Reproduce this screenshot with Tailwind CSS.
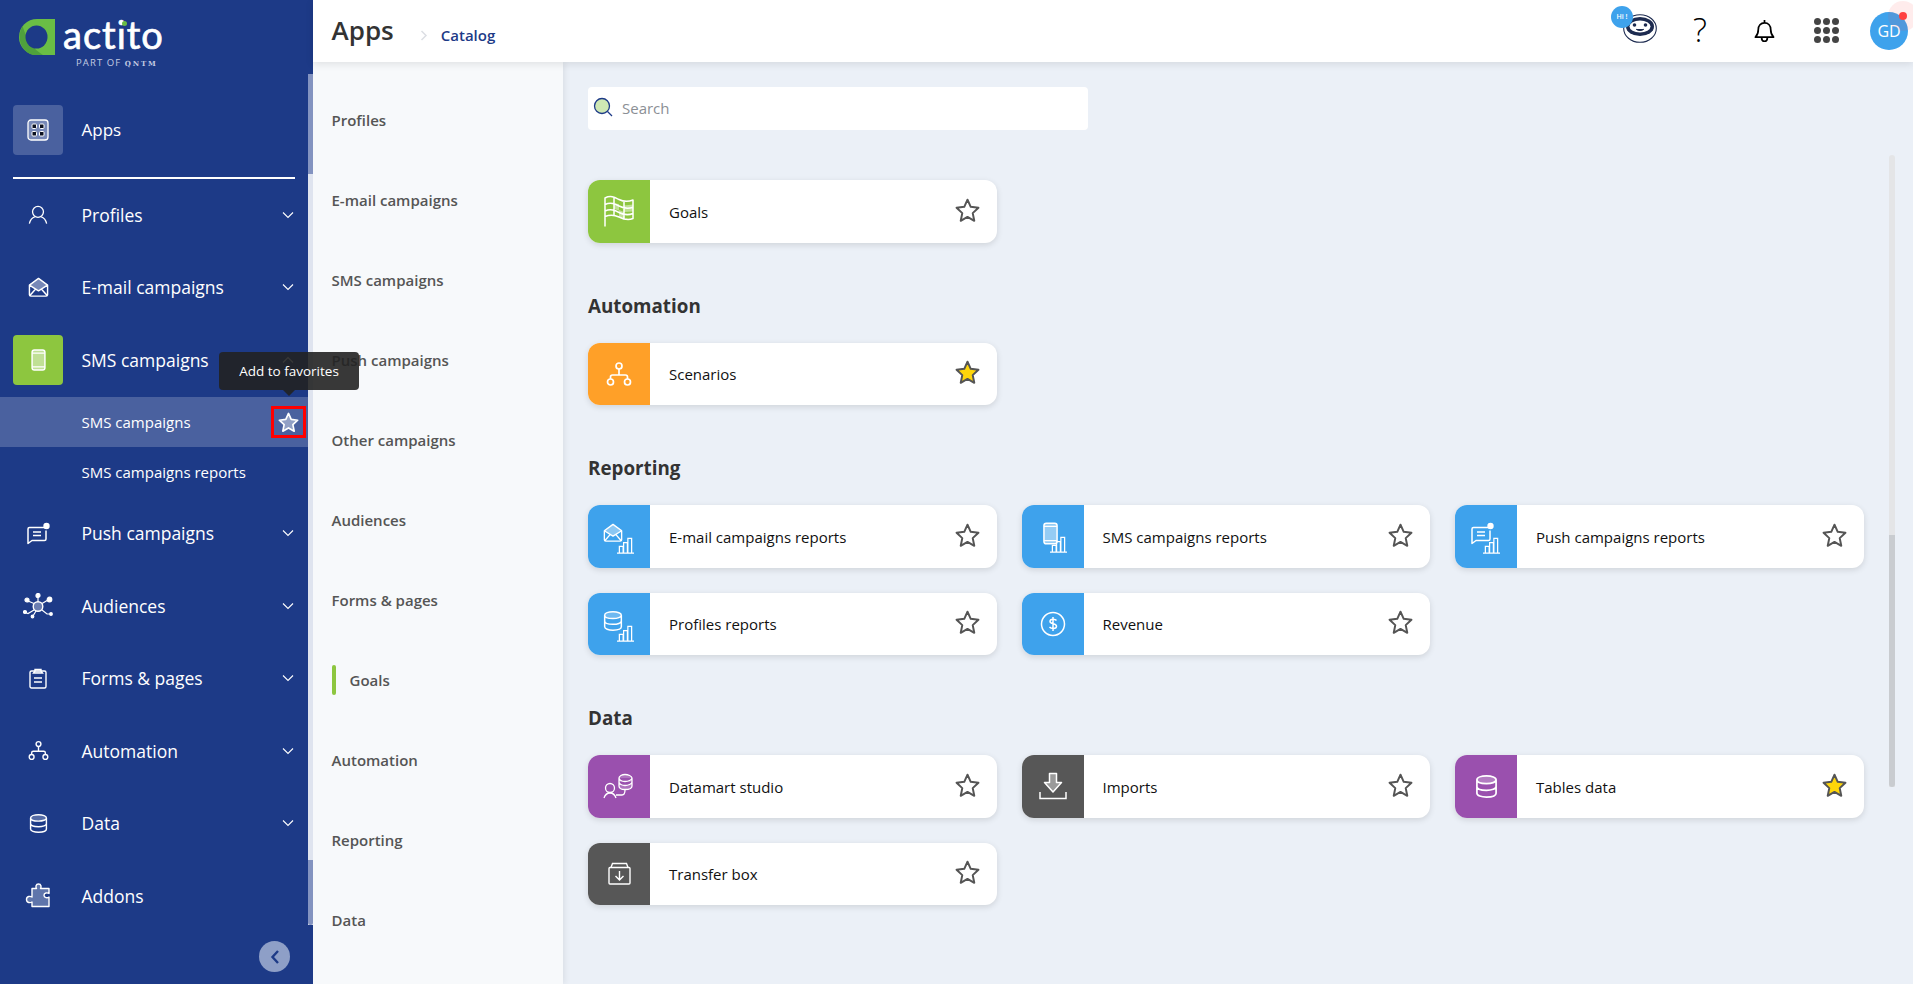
<!DOCTYPE html>
<html lang="en">

<head>
  <meta charset="UTF-8">
  <title>Apps - Catalog</title>
  <script src="https://cdn.jsdelivr.net/npm/@tailwindcss/browser@4"></script>
</head>

<body class="font-['Open_Sans',sans-serif]">
  <!-- shared icons -->
  <svg class="hidden">
    <symbol id="star" viewBox="0 0 24 24">
      <path d="M12 1.600l3.100 6.900 7.400.9-5.500 5.100 1.500 7.400L12 18.200l-6.500 3.700L7 14.500 1.500 9.400l7.400-.9z" stroke-width="1.900" stroke-linejoin="round" />
    </symbol>
    <symbol id="chev" viewBox="0 0 12 8">
      <path d="M1 1.500l5 5 5-5" fill="none" stroke="#fff" stroke-width="1.100" />
    </symbol>
    <symbol id="tree" viewBox="0 0 26 26">
      <g fill="none" stroke="currentColor" stroke-width="1.700">
        <circle cx="13" cy="5" r="3" />
        <circle cx="4.500" cy="21" r="3" />
        <circle cx="21.500" cy="21" r="3" />
        <path d="M13 8v6M4.500 18v-2a2 2 0 0 1 2-2h13a2 2 0 0 1 2 2v2" />
      </g>
    </symbol>
    <symbol id="db" viewBox="0 0 24 26">
      <path d="M2 6c0-2.500 4.500-4 10-4s10 1.500 10 4-4.500 4-10 4S2 8.500 2 6z" fill="#fff" fill-opacity=".25" />
      <path d="M2 6c0-2.500 4.500-4 10-4s10 1.500 10 4v14c0 2.500-4.500 4-10 4s-10-1.500-10-4zM2 6c0 2.500 4.500 4 10 4s10-1.500 10-4M2 13c0 2.500 4.500 4 10 4s10-1.500 10-4" fill="none" stroke="#fff" stroke-width="1.800" />
    </symbol>
    <symbol id="bars" viewBox="0 0 20 18">
      <path d="M1 17h18M3.500 17v-7h4v7M8 17V6h4v11M12.500 17V1.500h4V17" fill="none" stroke="#fff" stroke-width="1.300" />
    </symbol>
    <symbol id="envelope" viewBox="0 0 22 22">
      <path d="M11 1.500L21 8l-10 6L1 8z" fill="#fff" fill-opacity=".4" />
      <path d="M1.500 8.500L11 1.500l9.500 7v10a1.500 1.500 0 0 1-1.500 1.500H3a1.500 1.500 0 0 1-1.500-1.500zM1.500 8.500L11 14.500l9.500-6M1.500 20l6.500-7.500M20.500 20L14 12.500" fill="none" stroke="#fff" stroke-width="1.500" stroke-linejoin="round" />
    </symbol>
    <symbol id="phone" viewBox="0 0 16 24">
      <rect x="1" y="1" width="14" height="22" rx="2.500" fill="#fff" fill-opacity=".45" stroke="#fff" stroke-width="1.600" />
      <path d="M1 4.500h14M1 19.500h14" stroke="#fff" stroke-width="1.300" />
    </symbol>
    <symbol id="bubble" viewBox="0 0 24 22">
      <path d="M19 5H3.500A1.500 1.500 0 0 0 2 6.500V21l4-3h12.500a1.500 1.500 0 0 0 1.500-1.500V8" fill="none" stroke="#fff" stroke-width="1.500" stroke-linejoin="round" />
      <path d="M7 9.500h8M7 13h8" stroke="#fff" stroke-width="1.500" />
      <circle cx="20.500" cy="3.500" r="3.200" fill="#fff" />
    </symbol>
  </svg>

  <div class="flex h-screen overflow-hidden bg-[#ebf0f7]">

    <!-- Main sidebar -->
    <aside class="relative w-[313px] shrink-0 bg-[#1d3a87] text-white">
      <!-- Logo -->
      <div class="relative h-[105px]">
        <svg class="absolute left-[19px] top-[18px]" width="37" height="38" viewBox="0 0 37 38">
          <path d="M18 1a18 18 0 1 0 0 36h18V1z" fill="#6abd45" />
          <path d="M3.500 8C-3 20 2 34 14 37h10C14 31 8 22 3.500 8z" fill="#4fa13c" />
          <path d="M17.500 7.500a11 11.500 0 1 1 0 23 11 11.500 0 0 1 0-23z" fill="#1d3a87" />
          <path d="M29 1h7v36h-7z" fill="#6abd45" />
        </svg>
        <span class="absolute left-[63px] top-[8px] font-['Lato',sans-serif] text-[38px] leading-[52px] tracking-[1px] [-webkit-text-stroke:0.7px_white]">actito</span>
        <span class="absolute left-[122px] top-[21px] w-[5px] h-[5px] rounded-full bg-[#6abd45]"></span>
        <span class="absolute left-[76px] top-[56px] text-[9.500px] leading-[14px] tracking-[1.100px] text-[#c3cbe2] whitespace-nowrap">PART OF <span class="font-['DejaVu_Serif',serif] font-bold text-[7px] tracking-[1.800px]">QNTM</span></span>
      </div>

      <div class="flex items-center h-[50px]">
        <div class="ml-[13px] w-[50px] h-[50px] rounded-[4px] bg-white/20 flex items-center justify-center">
          <svg width="22" height="22" viewBox="0 0 22 22">
            <rect x="1" y="1" width="20" height="20" rx="3" fill="#fff" fill-opacity=".25" stroke="#fff" stroke-width="1.300" />
            <rect x="5" y="5" width="4.500" height="4.500" rx="1" fill="#0b1020" stroke="#fff" stroke-width="1" />
            <rect x="12.500" y="5" width="4.500" height="4.500" rx="1" fill="#0b1020" stroke="#fff" stroke-width="1" />
            <rect x="5" y="12.500" width="4.500" height="4.500" rx="1" fill="#0b1020" stroke="#fff" stroke-width="1" />
            <rect x="12.500" y="12.500" width="4.500" height="4.500" rx="1" fill="#0b1020" stroke="#fff" stroke-width="1" />
          </svg>
        </div>
        <span class="ml-[18.500px] text-[17px]">Apps</span>
      </div>
      <div class="ml-[13px] mt-[22px] w-[282px] h-[1.500px] bg-white"></div>

      <nav class="text-[17.500px]">
        <div class="flex items-center h-[72.500px] pr-[19px]">
          <div class="ml-[13px] w-[50px] flex justify-center">
            <svg width="20" height="20" viewBox="0 0 22 22" fill="none" stroke="#fff" stroke-width="1.400"><circle cx="11" cy="7.500" r="6" /><path d="M1.500 20.500c1-4.500 4-7 6-7.500M20.500 20.500c-1-4.500-4-7-6-7.500" /></svg>
          </div>
          <span class="ml-[18.500px] flex-1">Profiles</span>
          <svg width="12" height="8"><use href="#chev" /></svg>
        </div>
        <div class="flex items-center h-[72.500px] pr-[19px]">
          <div class="ml-[13px] w-[50px] flex justify-center"><svg width="21" height="21"><use href="#envelope" /></svg></div>
          <span class="ml-[18.500px] flex-1">E-mail campaigns</span>
          <svg width="12" height="8"><use href="#chev" /></svg>
        </div>
        <div class="flex items-center h-[72.500px] pr-[19px]">
          <div class="ml-[13px] w-[50px] h-[50px] rounded-[4px] bg-[#8dc63f] flex items-center justify-center"><svg width="15" height="22"><use href="#phone" /></svg></div>
          <span class="ml-[18.500px] flex-1">SMS campaigns</span>
          <svg class="rotate-180" width="12" height="8"><use href="#chev" /></svg>
        </div>
        <div class="flex items-center h-[50px] mt-[1px] pl-[81.500px] text-[15px] bg-white/20">SMS campaigns</div>
        <div class="flex items-center h-[50px] pl-[81.500px] text-[15px]">SMS campaigns reports</div>
        <div class="flex items-center h-[72.500px] pr-[19px]">
          <div class="ml-[13px] w-[50px] flex justify-center"><svg width="24" height="23"><use href="#bubble" /></svg></div>
          <span class="ml-[18.500px] flex-1">Push campaigns</span>
          <svg width="12" height="8"><use href="#chev" /></svg>
        </div>
        <div class="flex items-center h-[72.500px] pr-[19px]">
          <div class="ml-[13px] w-[50px] flex justify-center">
            <svg width="30" height="26" viewBox="0 0 30 26" fill="none" stroke="#fff" stroke-width="1.200">
              <circle cx="15" cy="13.500" r="4.800" fill="#fff" fill-opacity=".35" stroke-width="1.400" />
              <path d="M15 8.700V3.500M19 10.500l6-3.500M11 10.500L5 8M11 17l-6 3.500-3-1M19 17l5 4h4M13 18l-3 5" />
              <circle cx="15" cy="2.500" r="2" fill="#fff" /><circle cx="26.500" cy="6.500" r="2.300" fill="#fff" /><circle cx="4" cy="7" r="2" fill="#fff" /><circle cx="2" cy="19" r="1.500" fill="#fff" /><circle cx="28" cy="21" r="1.300" fill="#fff" /><circle cx="9.500" cy="23.500" r="1.300" fill="#fff" />
            </svg>
          </div>
          <span class="ml-[18.500px] flex-1">Audiences</span>
          <svg width="12" height="8"><use href="#chev" /></svg>
        </div>
        <div class="flex items-center h-[72.500px] pr-[19px]">
          <div class="ml-[13px] w-[50px] flex justify-center">
            <svg width="18" height="21" viewBox="0 0 18 21" fill="none" stroke="#fff" stroke-width="1.400">
              <rect x="1" y="3" width="16" height="17" rx="1.500" />
              <path d="M6 3V1.500h6V3l1.500 2h-9zM5 10h8M5 14h8" fill="#fff" fill-opacity=".4" />
            </svg>
          </div>
          <span class="ml-[18.500px] flex-1">Forms &amp; pages</span>
          <svg width="12" height="8"><use href="#chev" /></svg>
        </div>
        <div class="flex items-center h-[72.500px] pr-[19px]">
          <div class="ml-[13px] w-[50px] flex justify-center text-white"><svg width="21" height="21"><use href="#tree" /></svg></div>
          <span class="ml-[18.500px] flex-1">Automation</span>
          <svg width="12" height="8"><use href="#chev" /></svg>
        </div>
        <div class="flex items-center h-[72.500px] pr-[19px]">
          <div class="ml-[13px] w-[50px] flex justify-center"><svg width="19" height="21"><use href="#db" /></svg></div>
          <span class="ml-[18.500px] flex-1">Data</span>
          <svg width="12" height="8"><use href="#chev" /></svg>
        </div>
        <div class="flex items-center h-[72.500px] pr-[19px]">
          <div class="ml-[13px] w-[50px] flex justify-center">
            <svg width="26" height="25" viewBox="0 0 26 25"><path d="M7 6h4.500c-1-1.500-.8-4.500 2-4.500s3 3 2 4.500H24v5c-1.500-1-5-1-5 1.800s3.500 2.800 5 1.800V24H7v-4.500c-1.500 1-5.500 1.200-5.500-2.500S5.500 13.500 7 14.500z" transform="translate(0 -.5)" fill="#5f75ab" stroke="#fff" stroke-width="1.400" stroke-linejoin="round" /></svg>
          </div>
          <span class="ml-[18.500px] flex-1">Addons</span>
        </div>
      </nav>

      <!-- Sidebar scrollbar -->
      <div class="absolute right-0 top-[74px] w-[5px] h-[851px] bg-[#dfe4ef]">
        <div class="h-[100px] bg-[#8393c0]"></div>
        <div class="absolute bottom-0 w-full h-[65px] rounded-b-sm bg-[#8393c0]"></div>
      </div>

      <!-- Collapse button -->
      <button class="absolute left-[259px] top-[941px] w-[31px] h-[31px] rounded-full bg-[#8e9fc7] flex items-center justify-center">
        <svg width="10" height="16" viewBox="0 0 10 16"><path d="M8 2L2.500 8 8 14" fill="none" stroke="#1d3a87" stroke-width="2.400" /></svg>
      </button>

      <!-- Favorite star, highlighted by a red box -->
      <div class="absolute left-[271px] top-[406px] w-[35px] h-[32px] border-[3px] border-[#f00] flex items-center justify-center">
        <svg class="fill-white/40 stroke-white" width="21" height="21"><use href="#star" /></svg>
      </div>
    </aside>

    <div class="flex-1 flex flex-col min-w-0">
      <!-- Top bar -->
      <header class="relative z-10 h-[62px] shrink-0 bg-white shadow-[0_2px_8px_rgba(0,0,0,0.1)] flex items-center pl-[18.500px]">
        <h1 class="text-[26px] font-semibold text-[#333] leading-none -mt-[2px]">Apps</h1>
        <svg class="ml-[26px] mt-[8px]" width="8" height="11" viewBox="0 0 8 11"><path d="M1.500 1l4.500 4.500L1.500 10" fill="none" stroke="#dcdfe4" stroke-width="1.500" /></svg>
        <span class="ml-[13px] mt-[8px] text-[15px] font-semibold text-[#1d3a87]">Catalog</span>
        <div class="ml-auto relative h-full w-[320px]">
          <!-- robot + hi badge -->
          <svg class="absolute left-[30px] top-[14px]" width="34" height="29" viewBox="0 0 34 29">
            <ellipse cx="17" cy="14.500" rx="16.300" ry="13.800" fill="#fff" stroke="#1d2b50" stroke-width="1.100" />
            <ellipse cx="17" cy="12.500" rx="14" ry="9.500" fill="#1d2b50" />
            <ellipse cx="17" cy="12.500" rx="10.500" ry="6" fill="#fff" />
            <circle cx="11.500" cy="11" r="1.800" fill="#1d2b50" /><circle cx="22.500" cy="11" r="1.800" fill="#1d2b50" />
            <path d="M13 15c2 2 6 2 8 0" fill="#1d2b50" stroke="#1d2b50" />
          </svg>
          <span class="absolute left-[18px] top-[6px] w-[22px] h-[22px] rounded-full bg-[#3ea2ec] text-white text-[7px] font-semibold flex items-center justify-center">Hi !</span>
          <!-- help -->
          <span class="absolute left-[100px] top-[10px] text-[33px] leading-[40px] font-light text-black">?</span>
          <!-- bell -->
          <svg class="absolute left-[161px] top-[18px]" width="21" height="25" viewBox="0 0 22 26" fill="none" stroke="#000" stroke-width="1.800"><path d="M1.500 20c2-2 3-3.500 3-8 0-4 2.500-7 6.500-7s6.500 3 6.500 7c0 4.500 1 6 3 8zM11 5V2" stroke-linejoin="round" /><path d="M8 20.500c0 5 6 5 6 0" /></svg>
          <!-- apps menu -->
          <div class="absolute left-[221px] top-[18px] grid grid-cols-3 gap-[2px]">
            <span class="w-[7px] h-[7px] rounded-full bg-[#444]"></span><span class="w-[7px] h-[7px] rounded-full bg-[#444]"></span><span class="w-[7px] h-[7px] rounded-full bg-[#444]"></span>
            <span class="w-[7px] h-[7px] rounded-full bg-[#444]"></span><span class="w-[7px] h-[7px] rounded-full bg-[#444]"></span><span class="w-[7px] h-[7px] rounded-full bg-[#444]"></span>
            <span class="w-[7px] h-[7px] rounded-full bg-[#444]"></span><span class="w-[7px] h-[7px] rounded-full bg-[#444]"></span><span class="w-[7px] h-[7px] rounded-full bg-[#444]"></span>
          </div>
          <!-- avatar -->
          <span class="absolute left-[277px] top-[12px] w-[38px] h-[38px] rounded-full bg-[#3ea2ec] text-white text-[16px] flex items-center justify-center">GD</span>
          <span class="absolute left-[295px] top-[1px] w-[30px] h-[30px] rounded-full bg-[#ff4040]/10"></span>
          <span class="absolute left-[306px] top-[12px] w-[8px] h-[8px] rounded-full bg-[#ff4040]"></span>
        </div>
      </header>

      <div class="flex flex-1 min-h-0">
        <!-- Catalog sections -->
        <nav class="w-[250px] shrink-0 pt-[18px] pl-[18.500px] bg-[#f7f9fb] shadow-[2px_0_6px_rgba(0,0,0,0.07)] text-[15px] font-semibold text-[#555]">
          <div class="flex items-center h-[80px]">Profiles</div>
          <div class="flex items-center h-[80px]">E-mail campaigns</div>
          <div class="flex items-center h-[80px]">SMS campaigns</div>
          <div class="flex items-center h-[80px]">Push campaigns</div>
          <div class="flex items-center h-[80px]">Other campaigns</div>
          <div class="flex items-center h-[80px]">Audiences</div>
          <div class="flex items-center h-[80px]">Forms &amp; pages</div>
          <div class="flex items-center h-[80px]"><span class="w-[4px] h-[30px] mr-[14px] rounded-sm bg-[#8dc63f]"></span>Goals</div>
          <div class="flex items-center h-[80px]">Automation</div>
          <div class="flex items-center h-[80px]">Reporting</div>
          <div class="flex items-center h-[80px]">Data</div>
        </nav>

        <!-- Catalog content -->
        <main class="relative flex-1 pl-[25px] pt-[25px] overflow-hidden">
          <div class="flex items-center w-[500px] h-[43px] rounded-[4px] bg-white">
            <svg class="ml-[5px] -mt-[3px]" width="20" height="20" viewBox="0 0 20 20"><circle cx="9" cy="9" r="7.500" fill="#cfe8b4" stroke="#1d3a87" stroke-width="1.300" /><path d="M14.500 14.500l4.500 4.500" stroke="#1d3a87" stroke-width="1.300" /></svg>
            <span class="ml-[9px] text-[15px] text-[#8b8f95]">Search</span>
          </div>

          <div class="mt-[50px] grid grid-cols-[408.500px_408.500px_408.500px] gap-[25px]">
            <div class="flex items-center h-[62.500px] rounded-xl bg-white shadow-[0_2px_6px_rgba(0,0,0,0.12)] overflow-hidden">
              <div class="w-[62px] h-full shrink-0 bg-[#8dc63f] flex items-center justify-center">
                <svg width="32" height="32" viewBox="0 0 32 32" fill="none" stroke="#fff" stroke-width="1.500">
                  <path d="M11 8.500l5 .5v6.500l-5-1.500zM21 10.500l9-1v7l-9 .5zM16 15l5 2v6l-5-1.500z" fill="#fff" fill-opacity=".45" stroke="none" />
                  <path d="M2 31.500V3C8 0 12 2.500 16 4.500S25 7 30 5v18.500c-5 2-10 .5-14-1.500S8 19 2 21.500M11 2.200v19M21 6.200v18.500M2 9.500C8 7 12 9 16 11s9 3 14 1.200M2 16C8 13.500 12 15.500 16 17.500s9 3 14 1" stroke-linejoin="round" />
                </svg>
              </div>
              <span class="ml-[19px] mt-[1px] flex-1 text-[15px] text-[#111]">Goals</span>
              <svg class="mr-[17px] -mt-[2px] fill-white stroke-[#555]" width="25" height="25"><use href="#star" /></svg>
            </div>
          </div>

          <h2 class="mt-[51px] mb-[25px] h-[24px] text-[18.800px] leading-[24px] font-bold text-[#333]">Automation</h2>
          <div class="grid grid-cols-[408.500px_408.500px_408.500px] gap-[25px]">
            <div class="flex items-center h-[62.500px] rounded-xl bg-white shadow-[0_2px_6px_rgba(0,0,0,0.12)] overflow-hidden">
              <div class="w-[62px] h-full shrink-0 bg-[#ffa028] flex items-center justify-center text-white"><svg width="26" height="26"><use href="#tree" /></svg></div>
              <span class="ml-[19px] mt-[1px] flex-1 text-[15px] text-[#111]">Scenarios</span>
              <svg class="mr-[17px] -mt-[2px] fill-[#ffd60a] stroke-[#555]" width="25" height="25"><use href="#star" /></svg>
            </div>
          </div>

          <h2 class="mt-[51px] mb-[25px] h-[24px] text-[18.800px] leading-[24px] font-bold text-[#333]">Reporting</h2>
          <div class="grid grid-cols-[408.500px_408.500px_408.500px] gap-[25px]">
            <div class="flex items-center h-[62.500px] rounded-xl bg-white shadow-[0_2px_6px_rgba(0,0,0,0.12)] overflow-hidden">
              <div class="relative w-[62px] h-full shrink-0 bg-[#3ea2ec]">
                <svg class="absolute left-[15px] top-[18px]" width="20" height="20"><use href="#envelope" /></svg>
                <svg class="absolute left-[28px] top-[32px]" width="19" height="17"><use href="#bars" /></svg>
              </div>
              <span class="ml-[19px] mt-[1px] flex-1 text-[15px] text-[#111]">E-mail campaigns reports</span>
              <svg class="mr-[17px] -mt-[2px] fill-white stroke-[#555]" width="25" height="25"><use href="#star" /></svg>
            </div>
            <div class="flex items-center h-[62.500px] rounded-xl bg-white shadow-[0_2px_6px_rgba(0,0,0,0.12)] overflow-hidden">
              <div class="relative w-[62px] h-full shrink-0 bg-[#3ea2ec]">
                <svg class="absolute left-[21px] top-[17px]" width="15" height="23"><use href="#phone" /></svg>
                <svg class="absolute left-[27px] top-[31px]" width="19" height="17"><use href="#bars" /></svg>
              </div>
              <span class="ml-[19px] mt-[1px] flex-1 text-[15px] text-[#111]">SMS campaigns reports</span>
              <svg class="mr-[17px] -mt-[2px] fill-white stroke-[#555]" width="25" height="25"><use href="#star" /></svg>
            </div>
            <div class="flex items-center h-[62.500px] rounded-xl bg-white shadow-[0_2px_6px_rgba(0,0,0,0.12)] overflow-hidden">
              <div class="relative w-[62px] h-full shrink-0 bg-[#3ea2ec]">
                <svg class="absolute left-[15px] top-[17px]" width="24" height="23"><use href="#bubble" /></svg>
                <svg class="absolute left-[27px] top-[32px]" width="19" height="17"><use href="#bars" /></svg>
              </div>
              <span class="ml-[19px] mt-[1px] flex-1 text-[15px] text-[#111]">Push campaigns reports</span>
              <svg class="mr-[17px] -mt-[2px] fill-white stroke-[#555]" width="25" height="25"><use href="#star" /></svg>
            </div>
            <div class="flex items-center h-[62.500px] rounded-xl bg-white shadow-[0_2px_6px_rgba(0,0,0,0.12)] overflow-hidden">
              <div class="relative w-[62px] h-full shrink-0 bg-[#3ea2ec]">
                <svg class="absolute left-[15px] top-[17px]" width="20" height="22"><use href="#db" /></svg>
                <svg class="absolute left-[28px] top-[32px]" width="19" height="17"><use href="#bars" /></svg>
              </div>
              <span class="ml-[19px] mt-[1px] flex-1 text-[15px] text-[#111]">Profiles reports</span>
              <svg class="mr-[17px] -mt-[2px] fill-white stroke-[#555]" width="25" height="25"><use href="#star" /></svg>
            </div>
            <div class="flex items-center h-[62.500px] rounded-xl bg-white shadow-[0_2px_6px_rgba(0,0,0,0.12)] overflow-hidden">
              <div class="w-[62px] h-full shrink-0 bg-[#3ea2ec] flex items-center justify-center">
                <svg width="26" height="26" viewBox="0 0 26 26" fill="none" stroke="#fff" stroke-width="1.500"><circle cx="13" cy="13" r="11.500" /><path d="M16.500 9.500c-1-1.500-6.500-2-6.500 1 0 3 6.500 1.500 6.500 4.800 0 3-5.500 2.500-7 .7M13 6v14" /></svg>
              </div>
              <span class="ml-[19px] mt-[1px] flex-1 text-[15px] text-[#111]">Revenue</span>
              <svg class="mr-[17px] -mt-[2px] fill-white stroke-[#555]" width="25" height="25"><use href="#star" /></svg>
            </div>
          </div>

          <h2 class="mt-[51px] mb-[25px] h-[24px] text-[18.800px] leading-[24px] font-bold text-[#333]">Data</h2>
          <div class="grid grid-cols-[408.500px_408.500px_408.500px] gap-[25px]">
            <div class="flex items-center h-[62.500px] rounded-xl bg-white shadow-[0_2px_6px_rgba(0,0,0,0.12)] overflow-hidden">
              <div class="w-[62px] h-full shrink-0 bg-[#9a50ae] flex items-center justify-center">
                <svg width="32" height="26" viewBox="0 0 32 26" fill="none" stroke="#fff" stroke-width="1.300">
                  <circle cx="7" cy="15" r="4.500" /><path d="M1 25c1-3 3-5 6-5s5 2 6 5M13 22h6c3 0 3-3 3-5" />
                  <path d="M16 5c0-2 3-3.500 6-3.500S29 3 29 5v8c0 2-3 3.500-7 3.500S16 15 16 13zM16 5c0 2 3 3.500 6 3.500S29 7 29 5M16 9c0 2 3 3.500 6 3.500S29 11 29 9" fill="#fff" fill-opacity=".2" />
                </svg>
              </div>
              <span class="ml-[19px] mt-[1px] flex-1 text-[15px] text-[#111]">Datamart studio</span>
              <svg class="mr-[17px] -mt-[2px] fill-white stroke-[#555]" width="25" height="25"><use href="#star" /></svg>
            </div>
            <div class="flex items-center h-[62.500px] rounded-xl bg-white shadow-[0_2px_6px_rgba(0,0,0,0.12)] overflow-hidden">
              <div class="w-[62px] h-full shrink-0 bg-[#575757] flex items-center justify-center">
                <svg width="28" height="28" viewBox="0 0 28 28" fill="none" stroke="#fff" stroke-width="1.500"><path d="M10.500 1.500h7v9h5L14 20 5.500 10.500h5z" fill="#fff" fill-opacity=".4" stroke-linejoin="round" /><path d="M1 20v6.500h26V20" /></svg>
              </div>
              <span class="ml-[19px] mt-[1px] flex-1 text-[15px] text-[#111]">Imports</span>
              <svg class="mr-[17px] -mt-[2px] fill-white stroke-[#555]" width="25" height="25"><use href="#star" /></svg>
            </div>
            <div class="flex items-center h-[62.500px] rounded-xl bg-white shadow-[0_2px_6px_rgba(0,0,0,0.12)] overflow-hidden">
              <div class="w-[62px] h-full shrink-0 bg-[#9a50ae] flex items-center justify-center"><svg width="23" height="25"><use href="#db" /></svg></div>
              <span class="ml-[19px] mt-[1px] flex-1 text-[15px] text-[#111]">Tables data</span>
              <svg class="mr-[17px] -mt-[2px] fill-[#ffd60a] stroke-[#555]" width="25" height="25"><use href="#star" /></svg>
            </div>
            <div class="flex items-center h-[62.500px] rounded-xl bg-white shadow-[0_2px_6px_rgba(0,0,0,0.12)] overflow-hidden">
              <div class="w-[62px] h-full shrink-0 bg-[#575757] flex items-center justify-center">
                <svg width="23" height="23" viewBox="0 0 23 23" fill="none" stroke="#fff" stroke-width="1.400"><rect x="1" y="5.500" width="21" height="16.500" rx="1" /><path d="M3 5.500L4.500 1.500h14L20 5.500M11.500 9v9M7.500 14l4 4 4-4" /></svg>
              </div>
              <span class="ml-[19px] mt-[1px] flex-1 text-[15px] text-[#111]">Transfer box</span>
              <svg class="mr-[17px] -mt-[2px] fill-white stroke-[#555]" width="25" height="25"><use href="#star" /></svg>
            </div>
          </div>

          <!-- Content scrollbar -->
          <div class="absolute left-[1326px] top-[93px] w-[6px] bottom-[197px] rounded-t-sm bg-[#e4e5e7]">
            <div class="absolute bottom-0 w-full h-[252px] rounded-b-sm bg-[#c9ccd0]"></div>
          </div>
        </main>
      </div>
    </div>

    <!-- Tooltip -->
    <div class="absolute left-[219px] top-[352px] z-20 w-[140px] h-[38px] rounded-[4px] bg-[#222]/90 text-white text-[13.500px] flex items-center justify-center">
      Add to favorites
      <span class="absolute left-[64px] top-[38px] border-x-[6px] border-x-transparent border-t-[6px] border-t-[#222]/90"></span>
    </div>
  </div>
</body>

</html>
